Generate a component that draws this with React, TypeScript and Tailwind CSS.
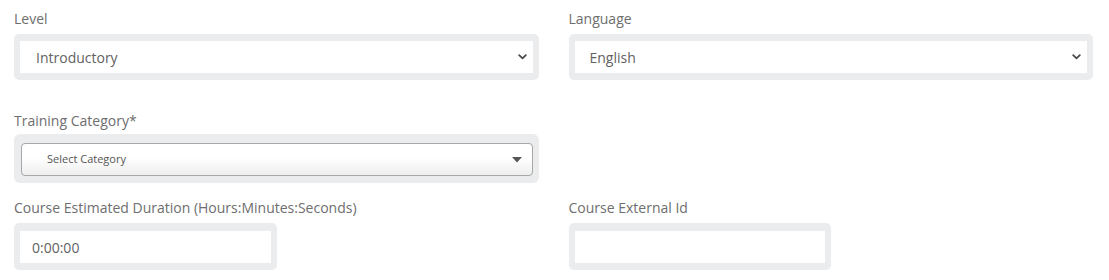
import React from "react";

function Chevron() {
  return (
    <svg width="9" height="6" viewBox="0 0 9 6" className="shrink-0">
      <path d="M1.2 1.2 L4.5 4.4 L7.8 1.2" fill="none" stroke="#4a4a4a" strokeWidth="1.8" strokeLinecap="round" strokeLinejoin="round" />
    </svg>
  );
}

function Label({ children }: { children: React.ReactNode }) {
  return <div className="h-[20px] leading-[20px] text-[14px] text-[#6e6e6e]">{children}</div>;
}

function SelectBox({ value, pl }: { value: string; pl: string }) {
  return (
    <div className="rounded-[5px] border-x-[6px] border-y-[7px] border-[#ebecee] bg-white">
      <div className={`flex h-[32px] items-center justify-between pr-[6px] ${pl}`}>
        <span className="text-[14px] text-[#626262]">{value}</span>
        <Chevron />
      </div>
    </div>
  );
}

export default function App() {
  return (
    <div className="w-[1109px] h-[280px] bg-white pl-[14px] pr-[16px] pt-[9px] font-['Open_Sans',sans-serif]">
      <div className="grid grid-cols-2 gap-x-[30px]">
        <div>
          <Label>Level</Label>
          <div className="mt-[5px]">
            <SelectBox value="Introductory" pl="pl-[16px]" />
          </div>
        </div>
        <div>
          <Label>Language</Label>
          <div className="mt-[5px]">
            <SelectBox value="English" pl="pl-[15px]" />
          </div>
        </div>
      </div>

      <div className="mt-[31px] grid grid-cols-2 gap-x-[30px]">
        <div>
          <Label>Training Category*</Label>
          <div className="mt-[3px] rounded-[6px] bg-[#ebecee] pt-[9px] pb-[7px] pl-[7px] pr-[6px]">
            <div className="flex h-[33px] items-center justify-between rounded-[4px] border border-[#a8a8a8] bg-[linear-gradient(to_bottom,#ffffff_0%,#ffffff_45%,#eeeeee_100%)] pl-[25px] pr-[10px]">
              <span className="text-[11px] text-[#555]">Select Category</span>
              <svg width="10" height="6" viewBox="0 0 10 6">
                <path d="M0 0 L10 0 L5 5.5 Z" fill="#555" />
              </svg>
            </div>
          </div>
        </div>
        <div />
      </div>

      <div className="mt-[15px] grid grid-cols-2 gap-x-[30px]">
        <div>
          <Label>Course Estimated Duration (Hours:Minutes:Seconds)</Label>
          <div className="mt-[5px] w-[263px] rounded-[5px] border-x-[6px] border-t-[8px] border-b-[7px] border-[#ebecee] bg-white">
            <div className="flex h-[32px] items-center pl-[12px] text-[14px] text-[#626262]">0:00:00</div>
          </div>
        </div>
        <div>
          <Label>Course External Id</Label>
          <div className="mt-[5px] w-[262px] rounded-[5px] border-x-[6px] border-t-[8px] border-b-[7px] border-[#ebecee] bg-white">
            <div className="h-[32px]" />
          </div>
        </div>
      </div>
    </div>
  );
}
